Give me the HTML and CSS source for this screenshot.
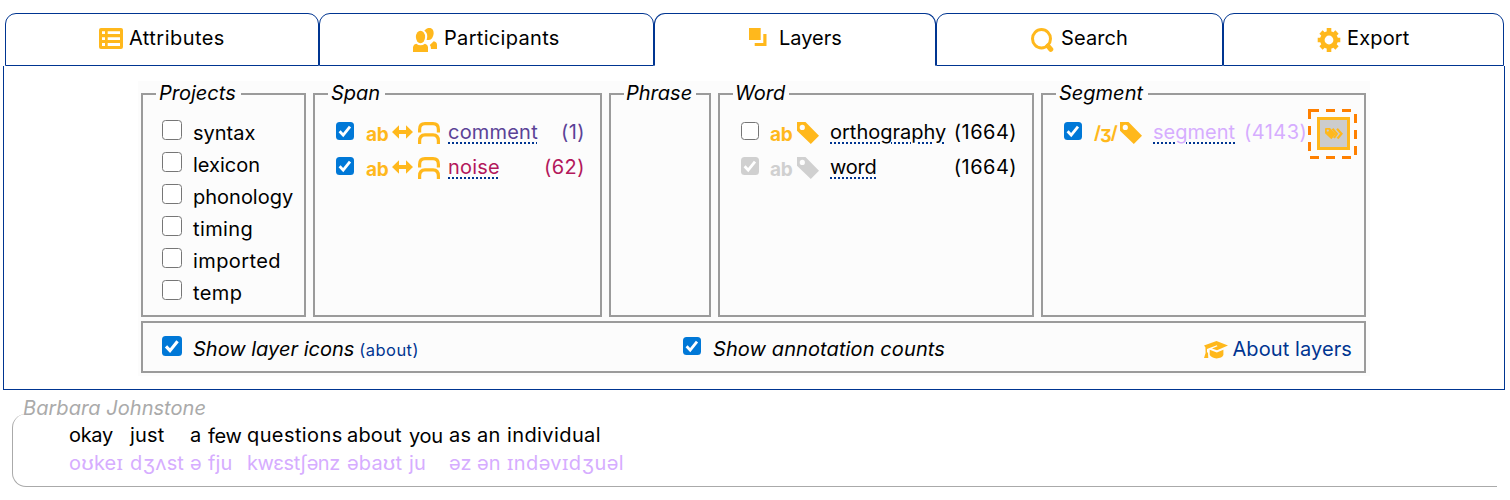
FILE: index.html
```html
<!DOCTYPE html>
<html lang="en">
<head>
<meta charset="utf-8">
<title>Layers</title>
<link rel="stylesheet" href="styles.css">
</head>
<body>
<svg class="defs" width="0" height="0">
  <symbol id="check" viewBox="0 0 18 18"><path d="M3.6 9.3l3.6 3.9L14 4.7" fill="none" stroke="#fff" stroke-width="2.8"/></symbol>
  <symbol id="arrow" viewBox="0 0 21 14"><path d="M0 7L7 .2V5H14V.2L21 7L14 13.8V9H7V13.8Z" fill="currentColor"/></symbol>
  <symbol id="span" viewBox="0 0 22 22"><path d="M1.6 10.5V7.5Q1.6 1.7 7 1.7H15Q20.4 1.7 20.4 7.5V10.5M1.6 22V19Q1.6 12.8 7 12.8H15Q20.4 12.8 20.4 19V22" fill="none" stroke="currentColor" stroke-width="3.2"/></symbol>
  <symbol id="tag" viewBox="0 0 22 22"><path fill-rule="evenodd" d="M0 0H8.5L22 13.8L13.8 22L0 8.7ZM5.3 2.8A2.6 2.6 0 1 0 5.3 8A2.6 2.6 0 1 0 5.3 2.8Z" fill="currentColor"/></symbol>
</svg>
<nav class="tabs">
  <a class="tab t-attributes"><svg width="24" height="21" viewBox="0 0 24 21"><path fill-rule="evenodd" fill="currentColor" d="M2 0H22Q24 0 24 2V19Q24 21 22 21H2Q0 21 0 19V2Q0 0 2 0ZM3 3.2V6H6V3.2ZM8.7 3.2V6H21V3.2ZM3 9.2V12H6V9.2ZM8.7 9.2V12H21V9.2ZM3 15V18H6V15ZM8.7 15V18H21V15Z"/></svg><span>Attributes</span></a>
  <a class="tab t-participants"><svg width="24" height="24" viewBox="0 0 24 24"><g fill="currentColor"><ellipse cx="7.5" cy="9" rx="4.6" ry="6.2"/><path d="M11.3 2.8Q14-.8 17.5 0Q21 1 20.6 6Q19.8 11.5 16 12H13.6Q15.6 5.5 11.3 2.8Z"/><path d="M0 24V19Q.5 16.3 3.2 15.7Q7.5 19 12 15.7Q14.8 16.5 15 19V24Z"/><path d="M16.8 17L20.7 13.3Q24 14 24 17V21H18Q18 18 16.8 17Z"/></g></svg><span>Participants</span></a>
  <a class="tab t-layers active"><svg width="18" height="18" viewBox="0 0 18 18"><path fill="currentColor" d="M0 0H11.7V12H0ZM14.3 6H17.5V18H5.7V15H14.3Z"/></svg><span>Layers</span></a>
  <a class="tab t-search"><svg width="24" height="24" viewBox="0 0 24 24"><ellipse cx="10.5" cy="10.7" rx="9" ry="9.2" fill="none" stroke="currentColor" stroke-width="3"/><path d="M17 18L19.8 21.3" stroke="currentColor" stroke-width="5" stroke-linecap="round"/></svg><span>Search</span></a>
  <a class="tab t-export"><svg width="24" height="24" viewBox="0 0 24 24"><g fill="none" stroke="currentColor"><circle cx="12" cy="12" r="6.7" stroke-width="4.6"/><path stroke-width="4.6" d="M12 0V4.5M12 19.5V24M.7 12H5M19 12H23.3M4 4L7 7M17 17L20 20M4 20L7 17M17 7L20 4"/></g></svg><span>Export</span></a>
</nav>
<main class="panel">
  <div class="layers">
    <fieldset class="projects"><legend>Projects</legend>
      <label><i class="box"></i><span>syntax</span></label>
      <label><i class="box"></i><span>lexicon</span></label>
      <label><i class="box"></i><span>phonology</span></label>
      <label><i class="box"></i><span class="wide">timing</span></label>
      <label><i class="box"></i><span class="wide">imported</span></label>
      <label><i class="box"></i><span class="wide">temp</span></label>
    </fieldset>
    <fieldset><legend>Span</legend>
      <div class="row span-row comment"><i class="box on"><svg><use href="#check"/></svg></i><b>ab</b><svg class="arrow"><use href="#arrow"/></svg><svg class="icon"><use href="#span"/></svg><span class="name">comment</span><span class="count">(1)</span></div>
      <div class="row span-row noise"><i class="box on"><svg><use href="#check"/></svg></i><b>ab</b><svg class="arrow"><use href="#arrow"/></svg><svg class="icon"><use href="#span"/></svg><span class="name">noise</span><span class="count">(62)</span></div>
    </fieldset>
    <fieldset class="phrase"><legend>Phrase</legend></fieldset>
    <fieldset class="words"><legend>Word</legend>
      <div class="row"><i class="box"></i><b>ab</b><svg class="icon"><use href="#tag"/></svg><span class="name">orthography</span><span class="count">(1664)</span></div>
      <div class="row off"><i class="box on"><svg><use href="#check"/></svg></i><b>ab</b><svg class="icon"><use href="#tag"/></svg><span class="name word">word</span><span class="count">(1664)</span></div>
    </fieldset>
    <fieldset><legend>Segment</legend>
      <div class="row segment"><i class="box on"><svg><use href="#check"/></svg></i><b class="ipa">/ʒ/</b><svg class="icon"><use href="#tag"/></svg><span class="name">segment</span><span class="count">(4143)</span>
        <div class="focus"><svg class="ring" width="50" height="50"><path d="M1.5 10V1.5H11M18 1.5H27M34 1.5H43M47.5 5V14M47.5 21V30M47.5 37V46M1.5 17V26M1.5 33V42M2 48.5H11M18 48.5H27M34 48.5H43" fill="none" stroke="#ff8000" stroke-width="3"/></svg><button><svg width="18" height="12" viewBox="0 0 18 12"><path fill-rule="evenodd" fill="currentColor" d="M0 1Q0 0 1 0H5L10.6 6L6.4 11.2L0 5.3ZM2.8 1.5A1.1 1.1 0 1 0 2.8 3.7A1.1 1.1 0 1 0 2.8 1.5Z"/><path d="M7.5 .8L11.8 5.8L9 10M12 .8L16.5 5.8L12.5 10.5" fill="none" stroke="currentColor" stroke-width="2.2"/></svg></button></div>
      </div>
    </fieldset>
    <div class="options">
      <label class="show-icons"><i class="box on"><svg><use href="#check"/></svg></i><em>Show layer icons</em></label><small>(<a>about</a>)</small>
      <label class="show-counts"><i class="box on"><svg><use href="#check"/></svg></i><em>Show annotation counts</em></label>
      <a class="about"><svg width="24" height="18" viewBox="0 0 24 18"><g fill="currentColor"><path d="M0 4.5L12.5 0L24 4.5L13 9.3L8 7.5L13.5 5.2L12.8 4.3L5.5 7L3 8V11L4 12L4.3 17H0L1.6 12L1.4 6.3Z"/><path d="M5.7 8.7L12.8 11.5L19.4 8.7V14Q18 17.2 12.5 17.4Q7.5 17 5.7 14Z"/></g></svg><span>About layers</span></a>
    </div>
  </div>
</main>
<section class="transcript">
  <h2>Barbara Johnstone</h2>
  <div class="turn">
    <div><span class="tight">okay</span><span class="phon">oʊkeɪ</span></div>
    <div><span>just</span><span class="phon">dʒʌst</span></div>
    <div><span>a</span><span class="phon">ə</span></div>
    <div><span class="low tight">few</span><span class="phon">fju</span></div>
    <div><span class="questions">questions</span><span class="phon long">kwɛstʃənz</span></div>
    <div><span>about</span><span class="phon">əbaʊt</span></div>
    <div><span class="low tight">you</span><span class="phon">ju</span></div>
    <div><span>as</span><span class="phon">əz</span></div>
    <div><span>an</span><span class="phon">ən</span></div>
    <div><span class="individual">individual</span><span class="phon individual">ɪndəvɪdʒuəl</span></div>
  </div>
</section>
</body>
</html>
```
FILE: styles.css
```css
* { box-sizing: border-box; }
body { margin: 0; padding: 13px 5px 0 3px; height: 500px; overflow: hidden; background: #fff; color: #000; font: 20px/26px Inter, "Noto Sans", sans-serif; white-space: nowrap; }
svg { display: block; flex: none; }
.defs { position: absolute; }
.tabs { display: grid; grid-template-columns: 314px 335px 282px 287px 281px; margin-left: 2px; height: 53px; }
.tab { display: flex; align-items: flex-start; border: 1px solid #003591; border-radius: 11px 11px 0 0; padding-top: 14px; letter-spacing: .32px; }
.tab.active { border-bottom-color: transparent; letter-spacing: 0; }
.tab svg { color: #ffb81c; }
.tab span { margin-top: -3px; }
.t-attributes { padding-left: 93px; gap: 6px; letter-spacing: .45px; }
.t-participants { padding-left: 93px; gap: 7px; }
.t-layers { padding-left: 94px; gap: 12px; }
.t-search { padding-left: 94px; gap: 6px; letter-spacing: .1px; }
.t-export { padding-left: 93px; gap: 6px; letter-spacing: .15px; }
.panel { width: 1502px; height: 324px; border: 1px solid #003591; border-top: 0; padding: 15px 0 0 134px; }
.layers { width: 1232px; height: 295px; padding: 0 4px 0 3px; background: #fcfcfc; display: grid; grid-template-columns: 165px 289px 102px 316px 325px; grid-template-rows: 236px 52px; column-gap: 7px; row-gap: 4px; }
fieldset { margin: 0; min-width: 0; border: 2px solid #9b9b9b; padding: 0 0 0 21px; }
legend { height: 26px; margin-left: -8px; padding: 0 5px 0 3px; font-style: italic; line-height: 24px; }
.phrase legend, .words legend { padding: 0 4px 0 2px; }
.box { width: 18px; height: 18px; flex: none; border: 1.5px solid #767676; border-radius: 3.5px; background: #fff; }
.box.on { border: 0; background: #0078d7; }
.box svg { width: 100%; height: 100%; }
.projects { padding-left: 19px; }
.projects legend { margin-left: -6px; }
.projects label { display: flex; height: 32px; gap: 11px; align-items: center; }
.projects .wide { letter-spacing: .4px; }
.projects legend + label { margin-top: 10px; }
.projects .box, .show-icons .box { width: 20px; height: 20px; margin-top: -7px; }
.row { display: flex; height: 35px; align-items: flex-start; padding-right: 15px; }
legend + .row { margin-top: 15px; }
.row b { width: 22px; margin-left: 12px; font-size: 19px; line-height: 26px; letter-spacing: -.4px; color: #ffb81c; }
.words .row b { margin-left: 11px; }
.row .ipa { font-size: 18px; line-height: 21px; letter-spacing: -.9px; }
.row svg.icon, .arrow { color: #ffb81c; }
.icon { width: 22px; height: 22px; margin-left: 5px; }
.arrow { width: 21px; height: 14px; margin: 3px 0 0 4px; }
.name { margin: -3px 0 0 11px; text-decoration: underline dotted #003591 2px; text-underline-offset: 3px; }
.word { letter-spacing: -.2px; }
.span-row .name { margin-left: 8px; letter-spacing: .2px; }
.count { margin: -3px 0 0 auto; letter-spacing: .45px; }
.comment { color: #5b4297; }
.noise { color: #b3185b; }
.off .box { background: #d0d0d0; }
.off b, .row.off svg.icon { color: #d0d0d0; }
.segment { color: #d6adff; padding-right: 0; position: relative; }
.segment .ipa + .icon { margin-left: 4px; }
.segment .count { margin-left: 9px; }
.focus { position: absolute; left: 244px; top: -13px; width: 50px; height: 50px; padding: 8px 9px; }
.ring { position: absolute; left: 0; top: 0; }
.focus button { width: 33px; height: 33px; border: 3px solid #ffb81c; background: #ccc; color: #ffb81c; padding: 0 0 0 5px; }
.options { grid-column: 1 / -1; border: 2px solid #9b9b9b; display: flex; align-items: center; padding: 4px 12px 0 19px; }
.options label { display: flex; align-items: center; gap: 11px; }
.options .box { margin-top: -7px; }
.options small { font-size: 16.5px; letter-spacing: .45px; margin-left: 5px; padding-top: 2px; color: #003591; }
.options .show-counts { position: absolute; left: 683px; gap: 12px; letter-spacing: .1px; }
.about { margin-left: auto; display: flex; gap: 4px; align-items: center; color: #003591; letter-spacing: .1px; }
.about svg { color: #ffb81c; margin-top: 1px; }
.transcript { padding: 0 8px 0 9px; }
h2 { position: relative; margin: 5px 0 -7px 11px; width: 184px; height: 26px; font-size: 20px; line-height: 26px; font-weight: 400; font-style: italic; letter-spacing: .05px; color: #aaa; }
.turn { height: 73px; border: 1px solid #aaa; border-width: 0 0 1px 1px; border-radius: 14px 0 0 14px; padding: 7px 0 0 56px; display: grid; grid-template-columns: 61px 60px 18px 39px 100px 62px 40px 28px 30px 120px; }
.turn span { display: block; height: 28px; line-height: 28px; letter-spacing: .15px; }
.turn .tight { letter-spacing: -.3px; }
.turn .questions, .turn .individual { letter-spacing: .4px; }
.turn .low { position: relative; top: 1px; }
.turn .phon { color: #d6adff; }
.turn .long { letter-spacing: -.5px; }
```
